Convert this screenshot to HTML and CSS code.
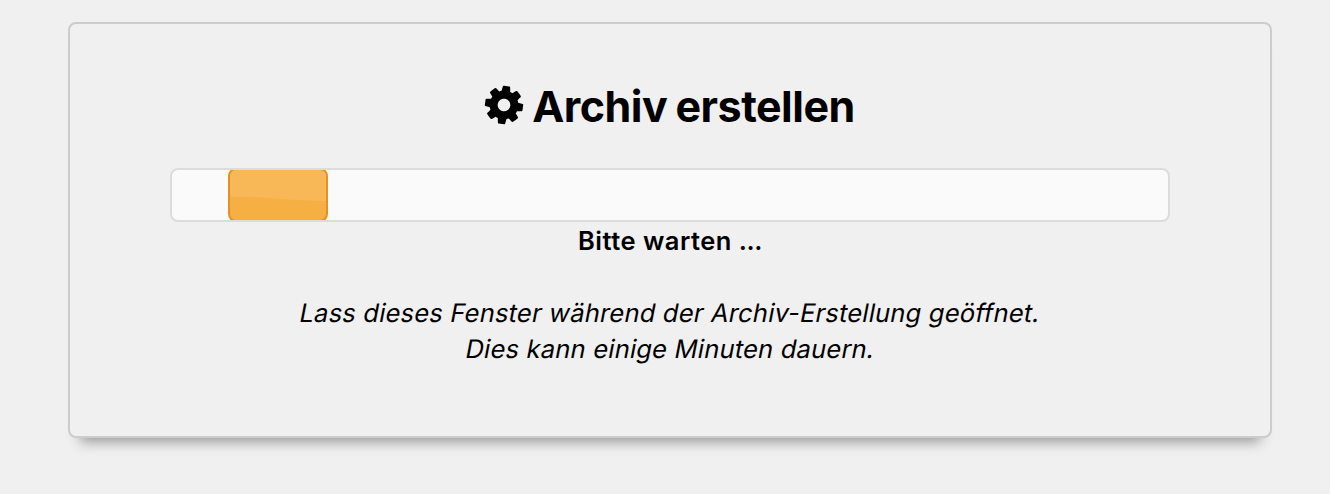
FILE: index.html
```html
<!DOCTYPE html>
<html lang="de">
<head>
<meta charset="utf-8">
<title>Archiv erstellen</title>
<link rel="stylesheet" href="styles.css">
</head>
<body>
<main class="dialog">
  <h1 class="title">
    <svg class="cog" viewBox="0 128 1536 1536" aria-hidden="true"><path transform="rotate(8 768 896)" d="M1024 896q0-106-75-181t-181-75-181 75-75 181 75 181 181 75 181-75 75-181zm512-109v222q0 12-8 23t-20 13l-185 28q-19 54-39 91 35 50 107 138 10 12 10 25t-9 23q-27 37-99 108t-94 71q-12 0-26-9l-138-108q-44 23-91 38-16 136-29 186-7 28-36 28h-222q-14 0-24.5-8.5t-11.5-21.5l-28-184q-49-16-90-37l-141 107q-10 9-25 9-14 0-25-11-126-114-165-168-7-10-7-23 0-12 8-23 15-21 51-66.5t54-70.5q-27-50-41-99l-183-27q-13-2-21-12.5t-8-23.5v-222q0-12 8-23t19-13l186-28q14-46 39-92-40-57-107-138-10-12-10-24 0-10 9-23 26-36 98.5-107.5t94.5-71.5q13 0 26 10l138 107q44-23 91-38 16-136 29-186 7-28 36-28h222q14 0 24.5 8.5t11.5 21.5l28 184q49 16 90 37l142-107q9-9 24-9 13 0 25 10 129 119 165 170 7 8 7 22 0 12-8 23-15 21-51 66.5t-54 70.5q26 50 41 98l183 28q13 2 21 12.5t8 23.5z"/></svg>
    <span class="title-text">Archiv erstellen</span>
  </h1>
  <div class="progress"><div class="progress-chunk"><svg class="gloss" viewBox="0 0 96 50" preserveAspectRatio="none" aria-hidden="true"><path d="M0 0H96V31Q64 30 42 28.500Q20 26.500 0 26.500Z"/></svg></div></div>
  <p class="status">Bitte warten <span class="dots">...</span></p>
  <p class="hint"><span class="hint-line">Lass dieses Fenster während der Archiv-Erstellung geöffnet.</span><span class="hint-line">Dies kann einige Minuten dauern.</span></p>
</main>
</body>
</html>
```
FILE: styles.css
```css
* { box-sizing: border-box; }
body {
  margin: 0;
  padding: 22px 58px 56px 68px;
  background: #f0f0f0;
  color: #000;
  font-family: Inter, "Liberation Sans", sans-serif;
}
.dialog {
  width: 1204px;
  height: 416px;
  padding: 55px 100px 0;
  border: 2px solid #ccc;
  border-radius: 8px;
  background: #f0f0f0;
  box-shadow: 0 16px 12px -12px #999;
  text-align: center;
}
.title {
  display: flex;
  justify-content: center;
  align-items: center;
  gap: 9px;
  height: 54px;
  margin: 0 0 35px;
  font-size: 43px;
  font-weight: 700;
  letter-spacing: -.5px;
  word-spacing: -1.5px;
  line-height: 54px;
  white-space: nowrap;
}
.cog { width: 38px; height: 38px; margin-top: -2px; overflow: visible; }
.progress {
  height: 54px;
  padding-left: 56px;
  border: 2px solid #dcdcdc;
  border-radius: 8px;
  background: #fafafa;
  overflow: hidden;
}
.progress-chunk {
  width: 100px;
  height: 54px;
  margin-top: -2px;
  border: 2px solid #e78f27;
  border-radius: 8px;
  background: #f6af43;
  overflow: hidden;
}
.gloss { display: block; width: 96px; height: 50px; fill: #f8b858; }
.status {
  margin: 0;
  padding-top: 1px;
  font-size: 25.5px;
  font-weight: 600;
  letter-spacing: .5px;
  line-height: 36px;
}
.dots { letter-spacing: -.4px; }
.hint {
  margin: 36px 0 0;
  font-size: 25.5px;
  letter-spacing: .2px;
  line-height: 36px;
}
/* Slants the upright face so that its two-storey "a" is kept. */
.hint-line {
  display: block;
  width: max-content;
  margin: 0 auto;
  transform: skewX(-11deg);
}
```
